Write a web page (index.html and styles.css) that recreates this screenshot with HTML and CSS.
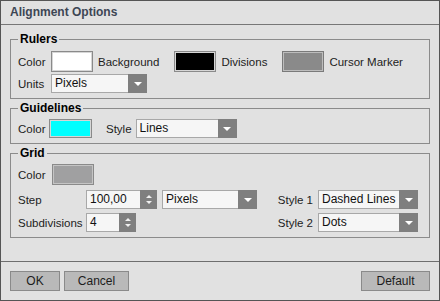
FILE: index.html
```html
<!DOCTYPE html>
<html>
  <head>
    <title>Alignment Options</title>
    <link rel="stylesheet" href="styles.css">
  </head>
  <body>
    <div class="dialog">
      <div class="titlebar">Alignment Options</div>

      <div class="content">
        <fieldset class="group group--rulers">
          <legend>Rulers</legend>
          <div class="row">
            <span class="lbl lbl--fixed">Color</span>
            <span class="swatch swatch--white"></span>
            <span class="lbl lbl--after">Background</span>
            <span class="swatch swatch--black"></span>
            <span class="lbl lbl--after">Divisions</span>
            <span class="swatch swatch--marker"></span>
            <span class="lbl">Cursor Marker</span>
          </div>
          <div class="row">
            <span class="lbl lbl--fixed">Units</span>
            <div class="combo combo--units">
              <span class="field-text">Pixels</span>
              <span class="combo-btn"></span>
            </div>
          </div>
        </fieldset>

        <fieldset class="group group--guides">
          <legend>Guidelines</legend>
          <div class="row row--guides">
            <span class="lbl lbl--fixed">Color</span>
            <span class="swatch swatch--cyan"></span>
            <span class="lbl lbl--style">Style</span>
            <div class="combo combo--lines">
              <span class="field-text">Lines</span>
              <span class="combo-btn"></span>
            </div>
          </div>
        </fieldset>

        <fieldset class="group group--grid">
          <legend>Grid</legend>
          <div class="row row--gridcolor">
            <span class="lbl lbl--fixed">Color</span>
            <span class="swatch swatch--grid"></span>
          </div>
          <div class="grid-form">
            <span class="lbl">Step</span>
            <div class="spin spin--step">
              <span class="field-text">100,00</span>
              <span class="spin-btn"></span>
            </div>
            <div class="combo">
              <span class="field-text">Pixels</span>
              <span class="combo-btn"></span>
            </div>
            <span></span>
            <span class="lbl">Style 1</span>
            <div class="combo">
              <span class="field-text">Dashed Lines</span>
              <span class="combo-btn"></span>
            </div>

            <span class="lbl">Subdivisions</span>
            <div class="spin spin--subdiv">
              <span class="field-text">4</span>
              <span class="spin-btn"></span>
            </div>
            <span></span>
            <span></span>
            <span class="lbl">Style 2</span>
            <div class="combo">
              <span class="field-text">Dots</span>
              <span class="combo-btn"></span>
            </div>
          </div>
        </fieldset>
      </div>

      <div class="footer">
        <button class="btn btn--ok">OK</button>
        <button class="btn btn--cancel">Cancel</button>
        <button class="btn btn--default">Default</button>
      </div>
    </div>
  </body>
</html>
```

FILE: styles.css
```css
body {
  margin: 0;
  font-family: 'Liberation Sans', Arial, sans-serif;
  font-size: 11.5px;
  color: #1c1c1c;
}

.dialog {
  width: 440px;
  height: 301px;
  box-sizing: border-box;
  border: 1px solid #555;
  background: #e1e1e1;
  display: flex;
  flex-direction: column;
}

.titlebar {
  height: 24px;
  box-sizing: border-box;
  border-bottom: 1px solid #777;
  padding-left: 9px;
  line-height: 23px;
  font-size: 12px;
  font-weight: bold;
  color: #3d4654;
}

.content {
  flex: 1;
  padding: 7px 9px 0;
}

.group {
  margin: 0;
  padding: 4px 11px 5px 7px;
  border: 1px solid #8b8b8b;
  min-inline-size: 0;
}

.group legend {
  padding: 0 2px;
  line-height: 15px;
  font-size: 12px;
  font-weight: bold;
  color: #000;
}

.group--guides,
.group--grid {
  margin-top: 2px;
  padding-top: 3px;
}

.row {
  display: flex;
  align-items: center;
  gap: 5px;
}

.row + .row {
  margin-top: 2px;
}

.lbl {
  white-space: nowrap;
}

.lbl--fixed {
  min-width: 28px;
}

.lbl--after {
  margin-right: 10px;
}

.row--guides {
  gap: 3px;
}

.lbl--style {
  margin-left: 11px;
  margin-right: 1px;
}

.row--gridcolor {
  gap: 6px;
}

.swatch {
  display: block;
  width: 42px;
  height: 21px;
  box-sizing: border-box;
  border: 1px solid #8a8a8a;
  box-shadow: inset 0 0 0 1px #d6d6d6;
}

.swatch--white {
  background: #fff;
}

.swatch--black {
  background: #000;
}

.swatch--marker {
  background: #8a8a8a;
  border-color: #7a7a7a;
  box-shadow: inset 0 0 0 1px #bdbdbd;
}

.swatch--cyan {
  width: 43px;
  height: 19px;
  background: #00ffff;
}

.swatch--grid {
  background: #a0a0a1;
  border-color: #8a8a8a;
  box-shadow: inset 0 0 0 1px #c4c4c4;
}

.combo,
.spin {
  display: flex;
  height: 19px;
  box-sizing: border-box;
  border: 1px solid #a8a8a8;
  border-right: none;
  background: #f6f6f6;
  color: #111;
}

.field-text {
  flex: 1;
  padding-left: 3px;
  line-height: 17px;
  font-size: 12px;
  white-space: nowrap;
  overflow: hidden;
}

.combo-btn,
.spin-btn {
  width: 19px;
  margin: -1px 0;
  background: #7f7f7f;
  display: flex;
  align-items: center;
  justify-content: center;
}

.combo-btn::after {
  content: '';
  border-left: 4px solid transparent;
  border-right: 4px solid transparent;
  border-top: 4px solid #fff;
  margin-top: 1px;
}

.spin-btn {
  width: 17px;
  flex-direction: column;
  gap: 3px;
}

.spin-btn::before {
  content: '';
  border-left: 3px solid transparent;
  border-right: 3px solid transparent;
  border-bottom: 3px solid #f0f0f0;
}

.spin-btn::after {
  content: '';
  border-left: 3px solid transparent;
  border-right: 3px solid transparent;
  border-top: 3px solid #f0f0f0;
}

.combo--units {
  width: 96px;
}

.combo--lines {
  width: 101px;
}

.grid-form {
  margin-top: 5px;
  display: grid;
  grid-template-columns: 63px 71px 95px 1fr auto 100px;
  column-gap: 5px;
  row-gap: 4px;
  align-items: center;
}

.spin--subdiv {
  width: 50px;
}

.footer {
  display: flex;
  gap: 4px;
  padding: 9px;
  border-top: 1px solid #6e6e6e;
}

.btn {
  height: 20px;
  padding: 0;
  border: 1px solid #8a8a8a;
  background: #b9b9b9;
  color: #1c1c1c;
  font-family: inherit;
  font-size: 12px;
}

.btn--ok {
  width: 50px;
}

.btn--cancel {
  width: 65px;
}

.btn--default {
  width: 69px;
  margin-left: auto;
}
```
